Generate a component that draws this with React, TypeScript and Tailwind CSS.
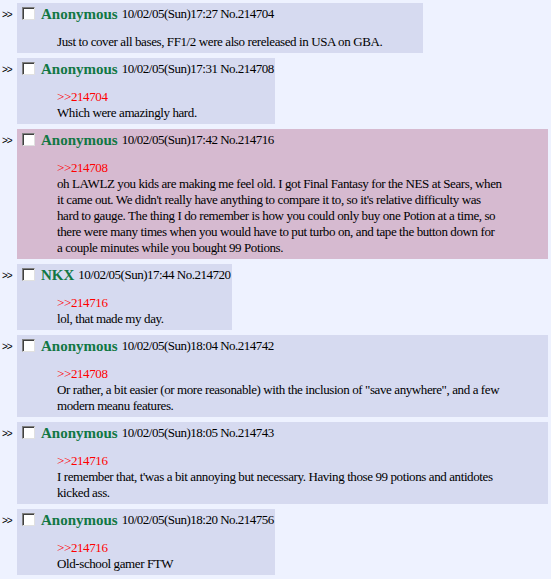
import React from 'react';

interface Post {
  id: number;
  name: string;
  date: string;
  quote?: string;
  lines: string[];
  width: string;
  highlight?: boolean;
}

const posts: Post[] = [
  {
    id: 214704,
    name: 'Anonymous',
    date: '10/02/05(Sun)17:27',
    lines: ['Just to cover all bases, FF1/2 were also rereleased in USA on GBA.'],
    width: 'w-[406px]',
  },
  {
    id: 214708,
    name: 'Anonymous',
    date: '10/02/05(Sun)17:31',
    quote: '214704',
    lines: ['Which were amazingly hard.'],
    width: 'w-[258px]',
  },
  {
    id: 214716,
    name: 'Anonymous',
    date: '10/02/05(Sun)17:42',
    quote: '214708',
    lines: [
      'oh LAWLZ you kids are making me feel old. I got Final Fantasy for the NES at Sears, when',
      "it came out. We didn't really have anything to compare it to, so it's relative difficulty was",
      'hard to gauge. The thing I do remember is how you could only buy one Potion at a time, so',
      'there were many times when you would have to put turbo on, and tape the button down for',
      'a couple minutes while you bought 99 Potions.',
    ],
    width: 'w-[531px]',
    highlight: true,
  },
  {
    id: 214720,
    name: 'NKX',
    date: '10/02/05(Sun)17:44',
    quote: '214716',
    lines: ['lol, that made my day.'],
    width: 'w-[215px]',
  },
  {
    id: 214742,
    name: 'Anonymous',
    date: '10/02/05(Sun)18:04',
    quote: '214708',
    lines: [
      'Or rather, a bit easier (or more reasonable) with the inclusion of "save anywhere", and a few',
      'modern meanu features.',
    ],
    width: 'w-[531px]',
  },
  {
    id: 214743,
    name: 'Anonymous',
    date: '10/02/05(Sun)18:05',
    quote: '214716',
    lines: [
      "I remember that, t'was a bit annoying but necessary. Having those 99 potions and antidotes",
      'kicked ass.',
    ],
    width: 'w-[531px]',
  },
  {
    id: 214756,
    name: 'Anonymous',
    date: '10/02/05(Sun)18:20',
    quote: '214716',
    lines: ['Old-school gamer FTW'],
    width: 'w-[258px]',
  },
];

const Checkbox = () => (
  <span className="inline-block w-[13px] h-[13px] bg-white border border-t-[#808080] border-l-[#808080] border-b-[#e0e0e0] border-r-[#e0e0e0] shadow-[inset_1px_1px_0_#404040]" />
);

const Reply = ({ post }: { post: Post }) => (
  <div className="flex items-start">
    <div className="w-[17px] pl-[2px] pt-[7px] text-[10px] leading-[10px] font-[family-name:Liberation_Sans,sans-serif] tracking-[-1px]">
      &gt;&gt;
    </div>
    <div
      className={`${post.width} pt-[1px] pb-[3px] ${post.highlight ? 'bg-[#d6bad0]' : 'bg-[#d6daf0]'}`}
    >
      <div className="h-[20px] flex items-start whitespace-nowrap">
        <div className="ml-[5px] mt-[3px] flex">
          <Checkbox />
        </div>
        <span className="ml-[6px] text-[15px] leading-[20px] font-bold text-[#117743]">{post.name}</span>
        <span className="ml-[4px] text-[13px] leading-[20px] tracking-[-0.5px]">
          {post.date} No.{post.id}
        </span>
      </div>
      <div className="mt-[10px] ml-[40px] text-[13px] leading-[16px] tracking-[-0.4px] whitespace-nowrap">
        {post.quote && <div className="text-[#ff0000]">&gt;&gt;{post.quote}</div>}
        {post.lines.map((line, i) => (
          <div key={i}>{line}</div>
        ))}
      </div>
    </div>
  </div>
);

export default function App() {
  return (
    <div className="min-h-[579px] bg-[#eef2ff] text-black font-[family-name:Liberation_Serif,serif] pt-[3px] flex flex-col gap-[5px]">
      {posts.map((post) => (
        <Reply key={post.id} post={post} />
      ))}
    </div>
  );
}
